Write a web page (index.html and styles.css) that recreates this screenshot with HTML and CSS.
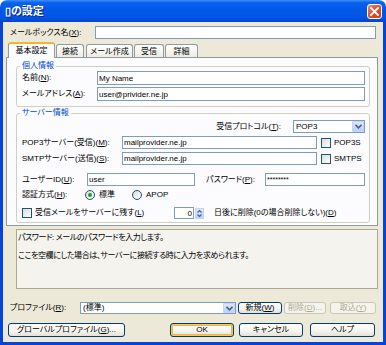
FILE: index.html
```html
<!DOCTYPE html>
<html lang="ja">
<head>
    <meta charset="UTF-8">
    <title>の設定</title>
    <link rel="stylesheet" href="styles.css">
</head>
<body>
<div class="window">
    <!-- Title bar -->
    <div class="titlebar">
        <span class="title">▯の設定</span>
        <span class="close-btn">
            <svg width="9" height="9" viewBox="0 0 9 9"><path d="M1 1 L8 8 M8 1 L1 8" stroke="#fff" stroke-width="1.8" stroke-linecap="square"/></svg>
        </span>
    </div>

    <div class="dialog">
        <div class="mailbox-row">
            <label class="mailbox-label">メールボックス名(<u>X</u>):</label>
            <input class="textbox mailbox-input" type="text" value="">
        </div>

        <!-- Tabs -->
        <div class="tabs">
            <div class="tab selected">基本設定</div>
            <div class="tab tab-conn">接続</div>
            <div class="tab tab-compose">メール作成</div>
            <div class="tab tab-recv">受信</div>
            <div class="tab tab-detail">詳細</div>
        </div>

        <div class="tab-panel">
            <fieldset class="group personal">
                <legend>個人情報</legend>
                <div class="field-row">
                    <label class="lbl-personal">名前(<u>N</u>):</label>
                    <input class="textbox personal-input" type="text" value="My Name">
                </div>
                <div class="field-row">
                    <label class="lbl-personal">メールアドレス(<u>A</u>):</label>
                    <input class="textbox personal-input" type="text" value="user@privider.ne.jp">
                </div>
            </fieldset>

            <fieldset class="group server">
                <legend>サーバー情報</legend>
                <div class="field-row proto-row">
                    <label class="lbl-proto">受信プロトコル(<u>T</u>):</label>
                    <div class="select proto-select">
                        <span class="select-text">POP3</span>
                        <span class="drop-btn">
                            <svg width="7" height="5" viewBox="0 0 7 5"><path d="M0.5 0.8 L3.5 3.8 L6.5 0.8" fill="none" stroke="#4d6185" stroke-width="1.6"/></svg>
                        </span>
                    </div>
                </div>
                <div class="field-row server-row">
                    <label class="lbl-server">POP3サーバー(受信)(<u>M</u>):</label>
                    <input class="textbox server-input" type="text" value="mailprovider.ne.jp">
                    <span class="checkbox"></span>
                    <span class="check-text">POP3S</span>
                </div>
                <div class="field-row server-row smtp-row">
                    <label class="lbl-server">SMTPサーバー(送信)(<u>S</u>):</label>
                    <input class="textbox server-input" type="text" value="mailprovider.ne.jp">
                    <span class="checkbox"></span>
                    <span class="check-text">SMTPS</span>
                </div>
                <div class="field-row user-row">
                    <label class="lbl-user">ユーザーID(<u>U</u>):</label>
                    <input class="textbox user-input" type="text" value="user">
                    <label class="lbl-pass">パスワード(<u>P</u>):</label>
                    <input class="textbox pass-input" type="text" value="********">
                </div>
                <div class="field-row auth-row">
                    <label class="lbl-auth">認証方式(<u>H</u>):</label>
                    <span class="radio-item std"><span class="radio checked"></span>標準</span>
                    <span class="radio-item"><span class="radio"></span>APOP</span>
                </div>
                <div class="field-row keep-row">
                    <span class="checkbox first"></span>
                    <span class="keep-text">受信メールをサーバーに残す(<u>L</u>)</span>
                    <input class="textbox days-input" type="text" value="0">
                    <span class="spin">
                        <svg width="5" height="9" viewBox="0 0 5 9"><path d="M0.5 3.5 L2.5 1.5 L4.5 3.5 M0.5 5.5 L2.5 7.5 L4.5 5.5" fill="none" stroke="#4d6185" stroke-width="1.2"/></svg>
                    </span>
                    <span class="days-text">日後に削除(0の場合削除しない)(<u>D</u>)</span>
                </div>
            </fieldset>
        </div>

        <!-- Help text -->
        <div class="help-box">
            <p>パスワード: メールのパスワードを入力します。</p>
            <p class="second">ここを空欄にした場合は、サーバーに接続する時に入力を求められます。</p>
        </div>

        <div class="profile-row">
            <label class="lbl-profile">プロファイル(<u>R</u>):</label>
            <div class="select profile-select">
                <span class="select-text">(標準)</span>
                <span class="drop-btn">
                    <svg width="7" height="5" viewBox="0 0 7 5"><path d="M0.5 0.8 L3.5 3.8 L6.5 0.8" fill="none" stroke="#4d6185" stroke-width="1.6"/></svg>
                </span>
            </div>
            <button class="btn btn-new">新規(<u>W</u>)</button>
            <button class="btn btn-del" disabled>削除(<u>D</u>)...</button>
            <button class="btn btn-import" disabled>取込(<u>Y</u>)</button>
        </div>

        <div class="button-row">
            <button class="btn btn-global">グローバルプロファイル(<u>G</u>)...</button>
            <button class="btn btn-ok default">OK</button>
            <button class="btn btn-cancel">キャンセル</button>
            <button class="btn btn-help">ヘルプ</button>
        </div>
    </div>
</div>
</body>
</html>
```

FILE: styles.css
```css
/* Reset */
* {
    margin: 0;
    padding: 0;
    box-sizing: border-box;
}

body {
    width: 386px;
    height: 345px;
    overflow: hidden;
    background-color: #fff;
    font: 8px "Liberation Sans", "Noto Sans CJK JP", sans-serif;
    font-feature-settings: "palt";
    line-height: 10px;
    color: #000;
}

u {
    text-decoration: underline;
    text-underline-offset: 1px;
}

.window {
    width: 386px;
    height: 345px;
    display: flex;
    flex-direction: column;
}

/* Title bar */
.titlebar {
    height: 22px;
    flex-shrink: 0;
    display: flex;
    align-items: center;
    justify-content: space-between;
    padding: 0 4px 0 5px;
    border-radius: 7px 7px 0 0;
    background: linear-gradient(to bottom, #3f8ffa 0%, #0b61ee 12%, #0257e8 45%, #0154e4 80%, #0346d0 100%);
}

.title {
    color: #fff;
    font-weight: bold;
    font-size: 11px;
    line-height: 12px;
    text-shadow: 1px 1px 0 #0a2a8a;
}

.close-btn {
    width: 15px;
    height: 15px;
    border: 1px solid #fff;
    border-radius: 3px;
    background: linear-gradient(135deg, #f08a6a 0%, #e0542f 45%, #c8401c 100%);
    display: flex;
    align-items: center;
    justify-content: center;
}

/* Dialog body */
.dialog {
    flex: 1;
    display: flex;
    flex-direction: column;
    padding: 0 3px;
    background-color: #ece9d8;
    border: 3px solid #0843d8;
    border-top: 0;
}

.textbox {
    height: 13px;
    border: 1px solid #7f9db9;
    background-color: #fff;
    padding: 0 1px;
    font: inherit;
    font-feature-settings: "palt";
    color: #000;
    outline: none;
}

.mailbox-row {
    display: flex;
    align-items: center;
    height: 13px;
    margin-top: 4px;
    padding-left: 4px;
}

.mailbox-label {
    width: 85px;
}

.mailbox-input {
    width: 281px;
}

/* Tabs */
.tabs {
    display: flex;
    align-items: flex-end;
    height: 16px;
    margin-top: 3px;
    padding-left: 2px;
}

.tab {
    height: 14px;
    display: flex;
    align-items: center;
    justify-content: center;
    border: 1px solid #919b9c;
    border-bottom: 0;
    border-radius: 3px 3px 0 0;
    background: linear-gradient(to bottom, #fff 0%, #f6f5f0 50%, #e9e8e1 100%);
    margin-right: 2px;
}

.tab.selected {
    position: relative;
    z-index: 1;
    height: 16px;
    width: 47px;
    margin-right: 1px;
    background: #fcfcfe;
    border-top: 2px solid #f8b133;
}

.tab-conn { width: 28px; }
.tab-compose { width: 47px; margin-right: 1px; }
.tab-recv { width: 30px; margin-right: 1px; }
.tab-detail { width: 33px; }

.tab-panel {
    height: 169px;
    margin-top: -1px;
    margin-right: 2px;
    padding: 3px 7px 0 9px;
    border: 1px solid #919b9c;
    background-color: #fcfcfe;
}

/* Group boxes */
.group {
    border: 1px solid #d0d0bf;
    border-radius: 3px;
    padding: 0 4px 5px 5px;
}

.group legend {
    color: #0046d5;
    line-height: 10px;
    padding: 0 2px;
    margin-left: -2px;
}

.group.server {
    margin-top: 1px;
    padding-bottom: 3px;
}

.field-row {
    display: flex;
    align-items: center;
    height: 14px;
}

.field-row + .field-row {
    margin-top: 2px;
}

.lbl-personal { width: 75px; }
.personal-input { width: 268px; height: 14px; }

.proto-row {
    justify-content: flex-end;
    height: 13px;
    margin-top: 2px;
}

.lbl-proto { margin-right: 12px; }

.select {
    height: 13px;
    display: flex;
    align-items: center;
    justify-content: space-between;
    border: 1px solid #7f9db9;
    background-color: #fff;
    padding-left: 2px;
}

.proto-select { width: 72px; }

.drop-btn {
    width: 12px;
    height: 11px;
    display: flex;
    align-items: center;
    justify-content: center;
    border: 1px solid #c3d3fd;
    border-radius: 1px;
    background: linear-gradient(to bottom, #dde7fd 0%, #bccffa 100%);
}

.field-row.server-row {
    height: 13px;
    margin-top: 3px;
}

.lbl-server { width: 100px; }
.server-input { width: 195px; }

.checkbox {
    width: 10px;
    height: 10px;
    border: 1px solid #1c5180;
    background: linear-gradient(135deg, #dcdcd7 0%, #fff 100%);
    margin-left: 4px;
}

.checkbox.first {
    margin-left: 0;
}

.check-text {
    margin-left: 3px;
}

.field-row.user-row {
    height: 13px;
    margin-top: 8px;
}

.lbl-user { width: 65px; }
.user-input { width: 108px; }
.lbl-pass { width: 59px; margin-left: 11px; }
.pass-input { width: 100px; font-size: 7px; }

.field-row.auth-row {
    height: 11px;
    margin-top: 3px;
}

.lbl-auth { width: 63px; }

.radio-item {
    display: flex;
    align-items: center;
}

.radio-item.std { width: 47px; }

.radio {
    width: 10px;
    height: 10px;
    border: 1px solid #1c5180;
    border-radius: 50%;
    background: linear-gradient(135deg, #dcdcd7 0%, #fff 100%);
    margin-right: 4px;
    display: flex;
    align-items: center;
    justify-content: center;
}

.radio.checked::after {
    content: "";
    width: 4px;
    height: 4px;
    border-radius: 50%;
    background-color: #21a121;
}

.field-row.keep-row {
    height: 12px;
    margin-top: 7px;
}

.keep-text {
    width: 139px;
    margin-left: 3px;
}

.days-input {
    width: 20px;
    height: 12px;
    text-align: right;
}

.spin {
    width: 9px;
    height: 11px;
    margin-left: 1px;
    display: flex;
    align-items: center;
    justify-content: center;
    border: 1px solid #c3d3fd;
    background: linear-gradient(to bottom, #dde7fd 0%, #bccffa 100%);
}

.days-text {
    margin-left: 10px;
}

/* Help text */
.help-box {
    height: 60px;
    margin: 3px 2px 0 10px;
    padding: 3px 0 0 1px;
    border: 1px solid #aca899;
    background-color: #f4f3ee;
    letter-spacing: -0.4px;
}

.help-box .second {
    margin-top: 8px;
}

/* Profile row */
.profile-row {
    display: flex;
    align-items: center;
    height: 12px;
    margin-top: 13px;
    padding-left: 4px;
}

.lbl-profile { width: 70px; }

.profile-select {
    width: 156px;
    height: 12px;
}

.profile-select .drop-btn {
    height: 10px;
}

.btn {
    height: 12px;
    border: 1px solid #003c74;
    border-radius: 3px;
    background: linear-gradient(to bottom, #fff 0%, #f4f3ee 60%, #e3e1d6 100%);
    font: inherit;
    font-feature-settings: "palt";
    line-height: 10px;
    color: #000;
}

.btn:disabled {
    border-color: #c9c7ba;
    color: #aca899;
    background: #f5f4ea;
}

.btn-new { width: 44px; margin-left: 2px; }
.btn-del { width: 42px; margin-left: 2px; }
.btn-import { width: 46px; margin-left: 4px; }

.button-row {
    display: flex;
    align-items: center;
    height: 14px;
    margin-top: 9px;
    padding-left: 2px;
}

.button-row .btn {
    height: 14px;
}

.btn-global { width: 117px; }
.btn-ok { width: 64px; margin-left: 45px; }
.btn-cancel { width: 64px; margin-left: 5px; }
.btn-help { width: 65px; margin-left: 7px; }

.btn.default {
    box-shadow: inset 0 0 0 1px #f9c660, inset 0 0 0 2px #f4b53f;
}
```
